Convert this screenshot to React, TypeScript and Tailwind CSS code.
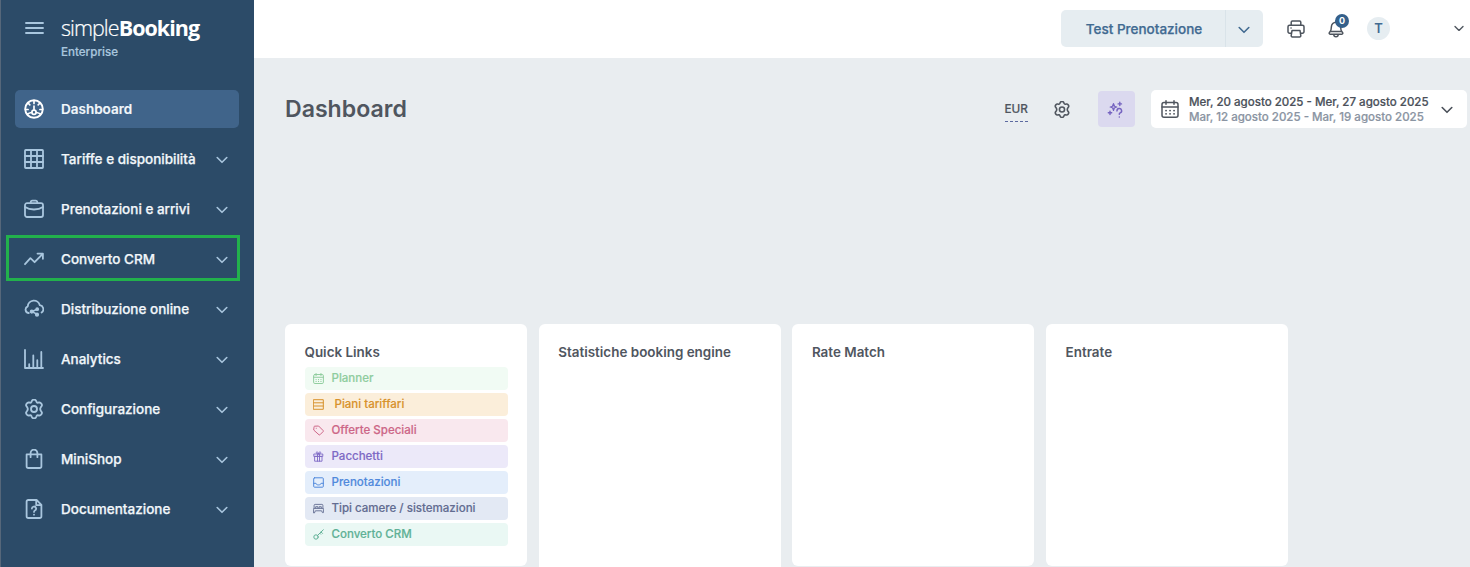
import React from "react";

type IconProps = { className?: string; children: React.ReactNode; box?: string; sw?: number };

function Svg({ className = "", children, box = "0 0 20 20", sw = 1.8 }: IconProps) {
  return (
    <svg viewBox={box} fill="none" stroke="currentColor" strokeWidth={sw} strokeLinecap="round" strokeLinejoin="round" className={`block shrink-0 ${className}`}>
      {children}
    </svg>
  );
}

const gearPath =
  "M7.9 2.2C8.500.5 11.500.5 12.100 2.200L12.400 3C12.600 3.700 13.200 4 13.900 3.900L14.900 3.700C16.700 3.400 18.400 6 17.300 7.300L16.600 8.300C16 9.200 16 10.800 16.600 11.700L17.300 12.700C18.400 14 16.700 16.600 14.900 16.300L13.900 16.100C13.200 16 12.600 16.300 12.400 17L12.100 17.800C11.500 19.500 8.500 19.500 7.900 17.800L7.600 17C7.400 16.300 6.800 16 6.100 16.100L5.100 16.300C3.300 16.600 1.600 14 2.700 12.700L3.400 11.700C4 10.800 4 9.200 3.400 8.300L2.700 7.300C1.600 6 3.300 3.400 5.100 3.700L6.100 3.900C6.800 4 7.400 3.700 7.600 3Z";

const Chevron = ({ className = "" }: { className?: string }) => (
  <Svg box="0 0 12 8" className={className} sw={1.6}>
    <path d="M1.200 1.500 6 6.300 10.800 1.500" />
  </Svg>
);

const Gear = ({ className = "" }: { className?: string }) => (
  <Svg className={className} box="1 0.300 18 19.400" sw={1.800}>
    <path d={gearPath} />
    <circle cx="10" cy="10" r="2.900" />
  </Svg>
);

const Calendar = ({ className = "", sw = 1.5 }: { className?: string; sw?: number }) => (
  <Svg className={className} box="0 0 18 18" sw={sw}>
    <rect x="1" y="2.5" width="16" height="14.7" rx="2" />
    <path d="M1 7h16M5 .8v3.4M13 .8v3.4" />
    <path d="M5 10.6h.1M9 10.6h.1M13 10.6h.1M5 13.8h.1M9 13.8h.1M13 13.8h.1" strokeWidth={sw * 1.2} />
  </Svg>
);

type NavItem = { label: string; icon: React.ReactNode; marked?: boolean; active?: boolean };

const nav: NavItem[] = [
  {
    label: "Dashboard",
    active: true,
    icon: (
      <Svg className="size-5" sw={1.9}>
        <circle cx="10" cy="10" r="8.8" />
        <path d="M10 1.5v3M4 4l1.8 1.8M16 4l-1.8 1.8M1.5 10.5h2.6M18.5 10.5h-2.6M10 7v4M3.4 15.2c1.2-.9 2.6-1.4 4.2-1.7M16.6 15.2c-1.2-.9-2.6-1.4-4.2-1.7" strokeWidth="1.700" />
        <circle cx="10" cy="13.2" r="2.1" strokeWidth="1.700" />
      </Svg>
    ),
  },
  {
    label: "Tariffe e disponibilità",
    icon: (
      <Svg className="size-5">
        <rect x="1" y="1" width="18" height="18" rx=".8" />
        <path d="M7 1v18M13 1v18M1 7h18M1 13h18" />
      </Svg>
    ),
  },
  {
    label: "Prenotazioni e arrivi",
    icon: (
      <Svg className="size-5">
        <rect x="1" y="4.2" width="18" height="13.8" rx="2" />
        <path d="M6.7 4V3.2a1.6 1.6 0 0 1 1.6-1.6h3.4a1.6 1.6 0 0 1 1.6 1.6V4M1 8c5 3.3 13 3.3 18 0" />
      </Svg>
    ),
  },
  {
    label: "Converto CRM",
    marked: true,
    icon: (
      <Svg className="size-5">
        <path d="M1 15.2 6.4 9.2l4.2 4L18.6 5M13.5 4.6h5.4v5.2" />
      </Svg>
    ),
  },
  {
    label: "Distribuzione online",
    icon: (
      <Svg className="size-5">
        <path d="M4.800 14H4.4A3.5 3.5 0 0 1 3.8 7.3 6.1 6.1 0 0 1 15.8 6.200a4.100 4.100 0 0 1 1.800 7.400" />
        <path d="M13.2 10.2 8 12.5l5.2 2.9" strokeWidth="1.500" />
        <circle cx="13.2" cy="10.2" r="1" fill="currentColor" />
        <circle cx="7.8" cy="12.6" r="1.2" fill="currentColor" />
        <circle cx="13" cy="15.7" r="1.2" fill="currentColor" />
      </Svg>
    ),
  },
  {
    label: "Analytics",
    icon: (
      <Svg className="size-5">
        <path d="M1 .9V19h18M5.2 18.6v-3.4M9.3 18.6V6.5M13.3 18.6v-7.4M17.3 18.6V3" />
      </Svg>
    ),
  },
  { label: "Configurazione", icon: <Gear className="size-5" /> },
  {
    label: "MiniShop",
    icon: (
      <Svg className="size-5">
        <path d="M2.6 5.4h14.8v11.8a1.8 1.8 0 0 1-1.8 1.8H4.4a1.8 1.8 0 0 1-1.8-1.8zM6.6 8.2V4a3.4 3.400 0 0 1 6.800 0v4.200" />
      </Svg>
    ),
  },
  {
    label: "Documentazione",
    icon: (
      <Svg className="size-5">
        <path d="M4.2 1h8.4l4.8 4.8v11.4a1.8 1.8 0 0 1-1.8 1.8H4.4a1.8 1.8 0 0 1-1.8-1.8V2.6A1.6 1.6 0 0 1 4.2 1zM12.2 1.2v5h5" />
        <path d="M7.9 9.6a2.1 2.1 0 1 1 3 1.9c-.6.3-.9.7-.9 1.4M10 15.6v.1" />
      </Svg>
    ),
  },
];

const links = [
  { label: "Planner", style: "bg-[#f1fbf4] text-[#8fcd9e]", icon: <Calendar className="size-[11px]" sw={1.6} /> },
  {
    label: "Piani tariffari",
    style: "bg-[#fbeeda] text-[#d8922c]",
    icon: (
      <Svg className="size-[11px]" box="0 0 11 11" sw={1}>
        <path d="M.7.7h9.6v9.6H.7zM.7 3.8h9.6M.7 7h9.6" />
      </Svg>
    ),
  },
  {
    label: "Offerte Speciali",
    style: "bg-[#f9e8ee] text-[#cd6687]",
    icon: (
      <Svg className="size-[11px]" box="0 0 11 11" sw={1}>
        <path d="M1 1.8Q1 1.2 1.6 1.2L5.6 1 10.2 5.6Q10.6 6 10.2 6.5L6.9 9.8Q6.4 10.2 6 9.8L1 5.3ZM3.2 3.3h.1" />
      </Svg>
    ),
  },
  {
    label: "Pacchetti",
    style: "bg-[#ece9f9] text-[#7e69c5]",
    icon: (
      <Svg className="size-[11px]" box="0 0 11 11" sw={0.9}>
        <path d="M1.2 3h8.6v2.4H1.2zM2 5.4h7v4.8H2zM4.5 3v7.2M6.5 3v7.2M5.5 3C4 3 2.8 2.3 3.3 1.3S5.3 1 5.5 3C5.7 1 7.2.3 7.700 1.300S7 3 5.500 3" />
      </Svg>
    ),
  },
  {
    label: "Prenotazioni",
    style: "bg-[#e4eefb] text-[#5089dc]",
    icon: (
      <Svg className="size-[11px]" box="0 0 11 11" sw={1}>
        <rect x=".7" y=".8" width="9.600" height="9.400" rx=".8" />
        <path d="M.7 6.300h2.200c.3 2.200 4.900 2.200 5.200 0h2.200" />
      </Svg>
    ),
  },
  {
    label: "Tipi camere / sistemazioni",
    style: "bg-[#e3e9f4] text-[#626c91]",
    icon: (
      <Svg className="size-[11px]" box="0 0 11 11" sw={0.9}>
        <path d="M.6 9.600V6.200L1.100 4.800V2.400Q1.100 1.400 2.100 1.400H8.900Q9.900 1.400 9.900 2.400V4.800L10.400 6.200V9.600H9.400L8.600 7.800H2.400L1.600 9.600ZM1.100 5.400h8.800M2.700 5.200V3.700h2.200V5.200M6.100 5.200V3.700h2.200V5.200" />
      </Svg>
    ),
  },
  {
    label: "Converto CRM",
    style: "bg-[#eaf8f4] text-[#60b196]",
    icon: (
      <Svg className="size-[11px]" box="0 0 11 11" sw={1}>
        <circle cx="3" cy="8" r="2.200" />
        <path d="M4.600 6.400 10.300.8M8.100 3l1.400 1.400M6.800 4.300l.9.9" />
      </Svg>
    ),
  },
];

function Sidebar() {
  return (
    <aside className="flex w-[254px] shrink-0 flex-col border-l border-[#56677a] bg-[#2c4b68]">
      <div className="flex h-[90px] pl-[23.5px] pt-[14px]">
        <Svg className="mt-[7px] h-[14px] w-[19px] text-[#a9c6de]" box="0 0 19 14" sw={1.9}>
          <path d="M1 2h17M1 7h17M1 12h17" />
        </Svg>
        <div className="ml-[17.5px]">
          <div className="h-[29px] whitespace-nowrap font-['Open_Sans',sans-serif] text-[21.5px] leading-[28px] tracking-[-0.95px] text-white">
            <span className="font-light [-webkit-text-stroke:0.2px]">simple</span>
            <span className="font-bold">Booking</span>
          </div>
          <div className="pt-px text-[11.6px] font-medium leading-4 text-[#a9c6de] [-webkit-text-stroke:0.2px]">Enterprise</div>
        </div>
      </div>
      <nav className="flex flex-col gap-3 pl-[14px] pr-[15px]">
        {nav.map((n) => (
          <div
            key={n.label}
            className={`relative flex h-[38px] items-center rounded-[5px] pl-[9px] pr-[11px] ${n.active ? "bg-[#40648a] text-white" : "text-[#a9c6de]"}`}
          >
            {n.icon}
            <span
              className={`-mt-px ml-[17px] flex-1 whitespace-nowrap text-[13.5px] leading-5 text-[#f1f6fa] ${n.active ? "font-semibold [-webkit-text-stroke:0.15px]" : "font-medium [-webkit-text-stroke:0.25px]"}`}
            >
              {n.label}
            </span>
            {!n.active && <Chevron className="mt-[2px] h-2 w-3" />}
            {n.marked && <span className="absolute -left-[9px] -right-[1px] -top-[5px] h-[46px] border-[3px] border-[#22b14c]" />}
          </div>
        ))}
      </nav>
    </aside>
  );
}

function TopBar() {
  return (
    <header className="flex h-[58px] items-start bg-white pr-[6px] pt-[10px]">
      <div className="ml-auto flex h-[37px] w-[202px] rounded-[5px] bg-[#e6edf1] text-[#416a91]">
        <div className="flex w-[164px] items-center justify-center pl-[2px] pt-[2px] text-[13.5px] font-medium [-webkit-text-stroke:0.25px]">Test Prenotazione</div>
        <div className="flex flex-1 items-center justify-center border-l border-[#d9e3e9] pr-[1px] pt-[3px]">
          <Chevron className="h-2 w-3" />
        </div>
      </div>
      <Svg className="ml-6 mt-[10px] h-[18px] w-[18px] text-[#4d545d]" box="0 0 18 18" sw={1.5}>
        <path d="M4.200 5.300V2.200A1.200 1.200 0 0 1 5.400 1h7.200a1.200 1.200 0 0 1 1.200 1.200v3.100M4 13.200H2.500A1.500 1.500 0 0 1 1 11.700V6.800a1.500 1.500 0 0 1 1.500-1.500h13A1.500 1.500 0 0 1 17 6.800v4.900a1.500 1.500 0 0 1-1.500 1.500H14M5 10.600h8l.8 5a1.200 1.200 0 0 1-1.200 1.400H5.400a1.200 1.200 0 0 1-1.200-1.400zM4 8h.1" />
      </Svg>
      <div className="relative ml-[23px] mt-[10px]">
        <Svg className="h-[18px] w-4 text-[#4d545d]" box="0 0 16 18" sw={1.5}>
          <path d="M8 2.200a4.600 4.600 0 0 0-4.600 4.600c0 3.600-.8 4.700-1.800 5.600-.8.800-.4 1.800.5 1.800h11.800c.9 0 1.300-1 .5-1.800-1-.9-1.800-2-1.800-5.600A4.600 4.600 0 0 0 8 2.200zM8 2.200V1M2.600 11.500h10.800M5.800 14.400c0 3 4.400 3 4.400 0" />
        </Svg>
        <span className="absolute -top-[6px] left-[7px] flex size-[14px] items-center justify-center rounded-full bg-[#34608b] text-[9px] font-bold text-white">0</span>
      </div>
      <div className="ml-[23px] mt-[7px] flex size-[23px] items-center justify-center rounded-full bg-[#e6edf1] text-[13px] font-semibold text-[#416a91]">T</div>
      <Chevron className="ml-16 mt-[15px] h-[7px] w-[10px] text-[#4d545d]" />
    </header>
  );
}

function Toolbar() {
  return (
    <div className="flex h-[38px] items-center pr-[3px]">
      <h1 className="pt-[2px] text-[23.1px] font-semibold leading-none text-[#50565f]">Dashboard</h1>
      <div className="ml-auto mt-[5px] border-b border-dashed border-[#5c6aa0] pb-1 text-[11.8px] font-medium leading-4 text-[#50565f] [-webkit-text-stroke:0.15px]">EUR</div>
      <Gear className="ml-[26px] h-[17px] w-4 text-[#50565f]" />
      <div className="ml-7 flex h-[36px] w-[37px] items-center justify-center rounded-[4px] bg-[#dbd9ef] pr-[2px] text-[#7563c0]">
        <Svg className="size-[17px]" box="0 0 17 17" sw={1.2}>
          <path fill="currentColor" fillOpacity=".35" d="M6.500 2.600Q6.800 5.700 9.800 6 6.800 6.300 6.500 9.400 6.200 6.300 3.200 6 6.200 5.700 6.500 2.600z" />
          <path d="M12.800 1.200v3.400M11.100 2.900h3.400M3 10.100v3.400M1.300 11.800h3.400" strokeWidth="1.400" />
          <path d="M10 9.900a2.300 2.300 0 1 1 3.200 2c-.6.300-.9.600-.9 1.300M12.300 15.900v.1" strokeWidth="1.500" />
        </Svg>
      </div>
      <div className="ml-4 flex h-[38px] w-[316px] items-center rounded-[5px] bg-white pl-[10px] pr-[14px]">
        <Calendar className="size-[18px] text-[#50565f]" />
        <div className="ml-[10px] flex-1 whitespace-nowrap pt-px text-[11.52px] font-medium leading-[15px] [-webkit-text-stroke:0.2px]">
          <div className="text-[#4a5059]">Mer, 20 agosto 2025 - Mer, 27 agosto 2025</div>
          <div className="text-[#8a94a2]">Mar, 12 agosto 2025 - Mar, 19 agosto 2025</div>
        </div>
        <Chevron className="mt-[2px] h-2 w-3 text-[#4a5059]" />
      </div>
    </div>
  );
}

function Card({ title, children, className = "" }: { title: string; children?: React.ReactNode; className?: string }) {
  return (
    <section className={`rounded-[6px] bg-white pl-[19.500px] pr-[19px] pt-[18px] ${className}`}>
      <h2 className="h-5 whitespace-nowrap text-[13.45px] font-semibold leading-5 text-[#50565f]">{title}</h2>
      {children}
    </section>
  );
}

export default function App() {
  return (
    <div className="flex h-[567px] w-[1470px] overflow-hidden bg-[#e9edf0] font-['Inter',sans-serif]">
      <Sidebar />
      <main className="min-w-0 flex-1">
        <TopBar />
        <div className="pl-[31px] pt-8">
          <Toolbar />
          <div className="mt-[196px] grid grid-cols-[repeat(4,242px)] gap-[11.7px]">
            <Card title="Quick Links" className="h-[242px]">
              <ul className="mt-[5px] flex flex-col gap-[3px]">
                {links.map((l) => (
                  <li key={l.label} className={`flex h-[23px] items-center rounded-[4px] pl-2 ${l.style}`}>
                    {l.icon}
                    <span
                      className={`-mt-px whitespace-nowrap text-[11.52px] font-medium leading-4 [-webkit-text-stroke:0.15px] ${l.label === "Piani tariffari" ? "ml-[11px]" : "ml-2"}`}
                    >
                      {l.label}
                    </span>
                  </li>
                ))}
              </ul>
            </Card>
            <Card title="Statistiche booking engine" className="h-[260px]" />
            <Card title="Rate Match" className="h-[242px]" />
            <Card title="Entrate" className="h-[242px]" />
          </div>
        </div>
      </main>
    </div>
  );
}
